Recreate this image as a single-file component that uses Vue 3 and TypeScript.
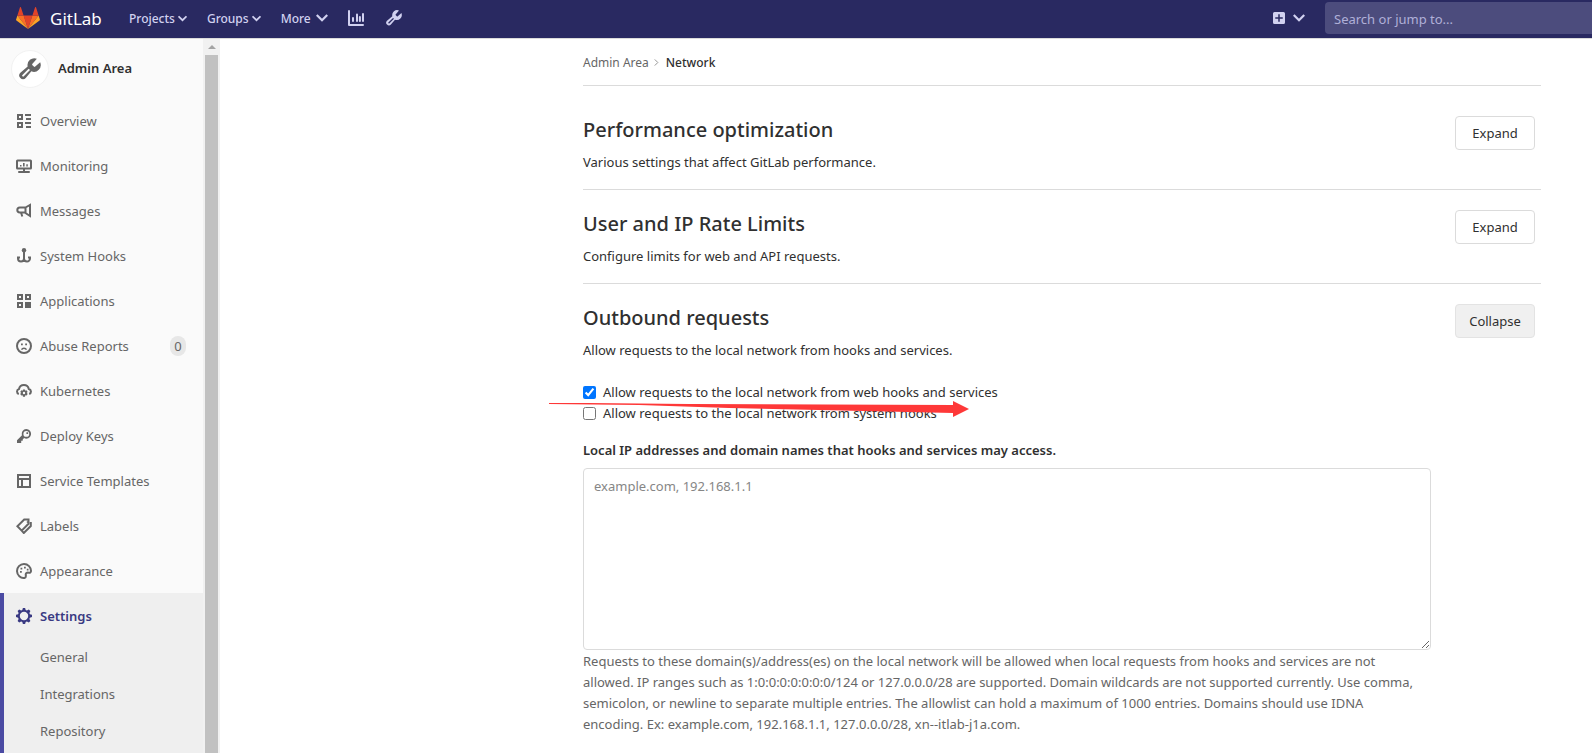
<script setup lang="ts">
import { ref } from 'vue'

interface Icon {
  fill?: string
  stroke?: string
}

interface NavItem {
  label: string
  icon: string
  badge?: number
}

const icons: Record<string, Icon> = {
  overview: {
    fill: 'M1 1h6v6H1zM3 3v2h2V3zM1 9h6v6H1zM3 11v2h2v-2zM9 1h6v2H9zM10 5h5v2h-5zM9 9h6v2H9zM10 13h5v2h-5z',
  },
  monitor: {
    fill: 'M1.500 1.500h13A1.500 1.500 0 0 1 16 3v7a1.500 1.500 0 0 1-1.500 1.500H9V13h4a1 1 0 0 1 0 2H3a1 1 0 0 1 0-2h4v-1.500H1.500A1.500 1.500 0 0 1 0 10V3a1.500 1.500 0 0 1 1.500-1.500zM2 3.500v6h12v-6zM4 7h1.500v1.500H4zM7 5h1.600v3.500H7zM10.300 6.200h1.500v2.300h-1.500z',
  },
  messages: {
    stroke: 'M9.500 4.500 14 2v11l-4.500-3zM9.500 4.500H3.800a2.200 2.200 0 0 0 0 5h5.700M5 9.500l1.300 4',
  },
  hook: {
    fill: 'M8 0a2.200 2.200 0 1 0 0 4.400A2.200 2.200 0 0 0 8 0z',
    stroke: 'M8 3v10.500M2 9v1.500a3 3 0 0 0 6 0 3 3 0 0 0 6 0V9M1 9.600h3M12 9.600h3',
  },
  applications: {
    fill: 'M1 1h6v6H1zM3 3v2h2V3zM9 1h6v6H9zM11 3v2h2V3zM1 9h6v6H1zM3 11v2h2v-2zM9 9h6v6H9z',
  },
  frown: {
    fill: 'M5 5.500h1.800v1.800H5zM9.200 5.500H11v1.800H9.200zM5 11.800C5.500 8.600 10.500 8.600 11 11.800H9.400C9 10.700 7 10.700 6.600 11.800z',
    stroke: 'M8 1a7 7 0 1 0 0 14A7 7 0 0 0 8 1z',
  },
  cloud: {
    fill: 'M7 6.500h2l.3 1.200 1.200-.5 1.200 1.700-1 .8 1 1.200-1.100 1.700-1.300-.4L9 13.700H7l-.4-1.500-1.300.4-1.100-1.700 1-1.200-1-.8 1.200-1.700 1.300.5zM8 8.800a1.200 1.200 0 1 0 0 2.400 1.200 1.200 0 0 0 0-2.400z',
    stroke: 'M2.800 11A2.600 2.600 0 0 1 3 6a5 5 0 0 1 9.800 0 2.600 2.600 0 0 1 .4 5',
  },
  key: {
    fill: 'M10.200 1a4.800 4.800 0 1 1-2.100 9.100L6.700 11.500v1.300H5.200V15H1v-2.800l5-5A4.800 4.800 0 0 1 10.200 1zM10.300 3a2.900 2.900 0 1 0 0 5.800 2.900 2.900 0 0 0 0-5.800zM10.400 4.200h1.700v1.700h-1.700z',
  },
  template: {
    fill: 'M1 1h14v14H1zM3 3v2h10V3zM3 7v6h2V7zM7 7v6h6V7z',
  },
  labels: {
    fill: 'M10.800 3.300h1.500v1.500h-1.500z',
    stroke: 'M8.200 1.500h4.300v4.300L5.700 12.600 1.400 8.300zM14.800 4v4l-7 7-2.100-2.400',
  },
  palette: {
    fill: 'M4 8h1.800v1.800H4zM4.500 4.800h1.800v1.800H4.500zM8 3.800h1.800v1.800H8zM10.800 5.800h1.700v1.700h-1.700z',
    stroke: 'M8.500 15A7 7 0 1 1 15 8.200c-.2 1.500-1.200 1.700-2.200 1.500-2-.4-3.400.7-3 2.500.2 1.200.2 2.400-1.300 2.800z',
  },
  gear: {
    fill: 'M6.900 0h2.200l.6 2 1.200.5 1.900-1 1.600 1.600-1 1.900.5 1.200 2.100.6v2.300l-2.100.7-.5 1.200 1 1.900-1.600 1.600-1.900-1-1.200.5-.6 2H6.900l-.6-2-1.200-.5-1.900 1-1.600-1.600 1-1.900L2.100 9.800 0 9.100V6.800l2.100-.6.5-1.200-1-1.900 1.600-1.600 1.900 1L6.300 2zM8 3.800a4.200 4.200 0 1 0 0 8.400 4.200 4.200 0 0 0 0-8.400z',
  },
  wrench: {
    fill: 'M9.800 4.200a.7.700 0 0 0 0 1l1 1a.7.700 0 0 0 1 0l3.600-3.100a5 5 0 0 1-6.400 6.600L4.900 14.500a2.600 2.600 0 0 1-3.900 0 2.600 2.600 0 0 1 0-3.700L6.300 6.200A5 5 0 0 1 13 .5zM7 7.900l-4.500 4.400a.7.700 0 0 0 1 1L8 8.800z',
  },
  chart: {
    fill: 'M1 0a1 1 0 0 1 1 1v13h13a1 1 0 0 1 0 2H1a1 1 0 0 1-1-1V1a1 1 0 0 1 1-1zM5 7a1 1 0 0 1 1 1v3a1 1 0 0 1-2 0V8a1 1 0 0 1 1-1zM8 4.500a1 1 0 0 1 2 0V11a1 1 0 0 1-2 0zM10.900 7a1 1 0 0 1 2 0v4a1 1 0 0 1-2 0zM14 4a1 1 0 0 1 2 0v7a1 1 0 0 1-2 0z',
  },
  plus: {
    fill: 'M2 0h12a2 2 0 0 1 2 2v12a2 2 0 0 1-2 2H2a2 2 0 0 1-2-2V2a2 2 0 0 1 2-2zM7 3v4H3v2h4v4h2V9h4V7H9V3z',
  },
  chevron: { stroke: 'M1 4l7 7 7-7' },
  angle: { stroke: 'M4 1l7 7-7 7' },
}

const menus = [
  { label: 'Projects', size: 'small' },
  { label: 'Groups', size: 'small' },
  { label: 'More', size: 'large' },
]

const navItems: NavItem[] = [
  { label: 'Overview', icon: 'overview' },
  { label: 'Monitoring', icon: 'monitor' },
  { label: 'Messages', icon: 'messages' },
  { label: 'System Hooks', icon: 'hook' },
  { label: 'Applications', icon: 'applications' },
  { label: 'Abuse Reports', icon: 'frown', badge: 0 },
  { label: 'Kubernetes', icon: 'cloud' },
  { label: 'Deploy Keys', icon: 'key' },
  { label: 'Service Templates', icon: 'template' },
  { label: 'Labels', icon: 'labels' },
  { label: 'Appearance', icon: 'palette' },
]

const settingsItems = ['General', 'Integrations', 'Repository']

const allowWebHooks = ref(true)
const allowSystemHooks = ref(false)
const allowlist = ref('')
</script>

<template>
  <div class="page">
    <header class="navbar">
      <a class="brand" href="#">
        <svg class="logo" viewBox="0 0 24 22" aria-hidden="true">
          <path fill="#e24329" d="M12 22l4.400-13.600H7.600z" />
          <path fill="#fc6d26" d="M12 22L7.600 8.400H1.400zM12 22l4.400-13.600h6.200z" />
          <path fill="#fca326" d="M1.400 8.400L.1 12.500a.9.900 0 0 0 .3 1L12 22zM22.600 8.400l1.300 4.100a.9.900 0 0 1-.3 1L12 22z" />
          <path fill="#e24329" d="M1.400 8.400h6.200L4.900.3a.5.500 0 0 0-.9 0zM22.600 8.400h-6.200L19.100.3a.5.500 0 0 1 .9 0z" />
        </svg>
        <span class="wordmark">GitLab</span>
      </a>
      <nav class="menus" aria-label="Main">
        <button v-for="menu in menus" :key="menu.label" :class="['menu', menu.size]" type="button">
          {{ menu.label }}
          <svg :class="['chevron', menu.size]" viewBox="0 0 16 16" aria-hidden="true">
            <path :d="icons.chevron.stroke" />
          </svg>
        </button>
        <a class="tool" href="#" aria-label="Analytics">
          <svg class="icon" viewBox="0 0 16 16"><path class="solid" :d="icons.chart.fill" /></svg>
        </a>
        <a class="tool" href="#" aria-label="Admin Area">
          <svg class="icon" viewBox="0 0 16 16"><path class="solid" :d="icons.wrench.fill" /></svg>
        </a>
      </nav>
      <button class="create" type="button" aria-label="New">
        <svg class="plus" viewBox="0 0 16 16"><path class="solid" :d="icons.plus.fill" /></svg>
        <svg class="chevron large" viewBox="0 0 16 16"><path :d="icons.chevron.stroke" /></svg>
      </button>
      <input class="search" type="search" placeholder="Search or jump to..." aria-label="Search or jump to" />
    </header>

    <div class="body">
      <aside class="sidebar">
        <nav class="side-nav" aria-label="Admin">
          <a class="context" href="#">
            <span class="avatar">
              <svg viewBox="0 0 16 16" aria-hidden="true"><path class="solid" :d="icons.wrench.fill" /></svg>
            </span>
            Admin Area
          </a>
          <a v-for="item in navItems" :key="item.label" class="side-link" href="#">
            <svg class="icon" viewBox="0 0 16 16" aria-hidden="true">
              <path class="solid" :d="icons[item.icon].fill" />
              <path class="line" :d="icons[item.icon].stroke" />
            </svg>
            <span>{{ item.label }}</span>
            <span v-if="item.badge !== undefined" class="badge">{{ item.badge }}</span>
          </a>
          <div class="current">
            <a class="side-link active" href="#">
              <svg class="icon" viewBox="0 0 16 16" aria-hidden="true">
                <path class="solid" :d="icons.gear.fill" />
              </svg>
              <span>Settings</span>
            </a>
            <a v-for="label in settingsItems" :key="label" class="sub-link" href="#">{{ label }}</a>
          </div>
        </nav>
        <div class="scrollbar" aria-hidden="true">
          <span class="scroll-up"></span>
          <span class="thumb"></span>
        </div>
      </aside>

      <main class="content">
        <nav class="breadcrumbs" aria-label="Breadcrumb">
          <a href="#">Admin Area</a>
          <svg class="angle" viewBox="0 0 16 16" aria-hidden="true"><path :d="icons.angle.stroke" /></svg>
          <span class="here">Network</span>
        </nav>

        <section class="settings first">
          <div class="section-head">
            <h4>Performance optimization</h4>
            <button class="btn" type="button">Expand</button>
          </div>
          <p>Various settings that affect GitLab performance.</p>
        </section>

        <section class="settings">
          <div class="section-head">
            <h4>User and IP Rate Limits</h4>
            <button class="btn" type="button">Expand</button>
          </div>
          <p>Configure limits for web and API requests.</p>
        </section>

        <section class="settings">
          <div class="section-head">
            <h4>Outbound requests</h4>
            <button class="btn pressed" type="button">Collapse</button>
          </div>
          <p>Allow requests to the local network from hooks and services.</p>

          <form class="form" @submit.prevent>
            <div class="checks">
              <div class="check">
                <input id="web-hooks" v-model="allowWebHooks" type="checkbox" />
                <label for="web-hooks">Allow requests to the local network from web hooks and services</label>
              </div>
              <div class="check">
                <input id="system-hooks" v-model="allowSystemHooks" type="checkbox" />
                <label for="system-hooks">Allow requests to the local network from system hooks</label>
              </div>
              <svg class="arrow" viewBox="0 0 420 16" aria-hidden="true">
                <path d="M0 2h40l100 1 264 1V0l16 8-16 8v-4L180 7 90 4 0 3z" />
              </svg>
            </div>
            <label class="field-label" for="allowlist">Local IP addresses and domain names that hooks and services may access.</label>
            <textarea id="allowlist" v-model="allowlist" placeholder="example.com, 192.168.1.1"></textarea>
            <div class="help">
              Requests to these domain(s)/address(es) on the local network will be allowed when local requests from hooks and services are not allowed. IP ranges such as 1:0:0:0:0:0:0:0/124 or 127.0.0.0/28 are supported. Domain wildcards are not supported currently. Use comma, semicolon, or newline to separate multiple entries. The allowlist can hold a maximum of 1000 entries. Domains should use IDNA encoding. Ex: example.com, 192.168.1.1, 127.0.0.0/28, xn--itlab-j1a.com.
            </div>
          </form>
        </section>
      </main>
    </div>
  </div>
</template>

<style>
body {
  margin: 0;
  overflow: hidden;
}
</style>

<style scoped>
.page {
  height: 100vh;
  display: flex;
  flex-direction: column;
  overflow: hidden;
  background: #fff;
  color: #303030;
  font-family: "Noto Sans", "Open Sans", sans-serif;
  font-size: 13px;
  line-height: 21px;
}

.page *,
.page *::before {
  box-sizing: border-box;
}

a {
  color: inherit;
  text-decoration: none;
}

button,
input,
textarea {
  font: inherit;
  color: inherit;
}

.solid {
  fill: currentColor;
  fill-rule: evenodd;
}

.line,
.chevron path,
.angle path {
  fill: none;
  stroke: currentColor;
  stroke-width: 2;
}

.icon {
  width: 16px;
  height: 16px;
  flex: none;
  display: block;
}

.navbar {
  flex: none;
  height: 39px;
  display: flex;
  align-items: center;
  padding: 0 0 2px 16px;
  border-bottom: 1px solid #dbdbdb;
  background: #292961;
  color: #d1d1f0;
}

.brand {
  display: flex;
  align-items: center;
  gap: 10px;
  width: 113px;
  color: #fff;
}

.logo {
  width: 24px;
  height: 22px;
}

.wordmark {
  font-size: 17px;
}

.menus {
  display: flex;
  align-items: center;
}

.menu {
  display: flex;
  align-items: center;
  gap: 3px;
  margin: 0 20px 0 0;
  padding: 0;
  border: 0;
  background: none;
  font-size: 12px;
  font-weight: 500;
}

.menu.large {
  gap: 5px;
}

.chevron.small {
  width: 9px;
  height: 9px;
}

.chevron.large {
  width: 12px;
  height: 12px;
}

.chevron path {
  stroke-width: 3;
}

.tool {
  margin-right: 22px;
}

.create {
  display: flex;
  align-items: center;
  gap: 8px;
  margin: 0 20px 0 auto;
  padding: 0;
  border: 0;
  background: none;
}

.plus {
  width: 12px;
  height: 12px;
}

.search {
  width: 267px;
  height: 32px;
  padding: 1px 9px 0;
  border: 0;
  border-radius: 4px 0 0 4px;
  outline: 0;
  background: #4c4c7d;
}

.search::placeholder {
  color: #b0b0d8;
  opacity: 1;
}

.body {
  flex: 1;
  min-height: 0;
  display: flex;
  justify-content: space-between;
}

.sidebar {
  width: 220px;
  flex: none;
  display: flex;
  background: #fafafa;
}

.side-nav {
  flex: 1;
  overflow: hidden;
  color: #666;
}

.context {
  height: 59px;
  display: flex;
  align-items: center;
  gap: 9px;
  padding-left: 11px;
  color: #303030;
  font-weight: 600;
}

.avatar {
  width: 38px;
  height: 38px;
  display: grid;
  place-items: center;
  border: 1px solid #f2f2f2;
  border-radius: 50%;
  background: #fff;
  color: #666;
}

.avatar svg {
  width: 22px;
  height: 22px;
}

.side-link {
  height: 45px;
  display: flex;
  align-items: center;
  gap: 8px;
  padding: 1px 17px 0 16px;
}

.badge {
  min-width: 16px;
  margin-left: auto;
  border-radius: 10px;
  background: #e7e7e7;
  line-height: 20px;
  text-align: center;
}

.current {
  height: 200px;
  background: #efefef;
  box-shadow: inset 4px 0 #4b4ba3;
}

.side-link.active {
  color: #393982;
  font-weight: 600;
}

.sub-link {
  display: block;
  padding: 9px 16px 7px 40px;
}

.scrollbar {
  width: 17px;
  flex: none;
  display: flex;
  flex-direction: column;
  align-items: center;
  background: #f1f1f1;
}

.scroll-up {
  height: 10px;
  margin-bottom: 6px;
  border: 4px solid transparent;
  border-top-width: 2px;
  border-bottom-color: #a3a3a3;
}

.thumb {
  flex: 1;
  width: 13px;
  background: #c1c1c1;
}

.content {
  flex: 0 1 958px;
  margin: 0 51px 0 24px;
}

.breadcrumbs {
  height: 46px;
  display: flex;
  align-items: center;
  gap: 4px;
  font-size: 12px;
  color: #666;
}

.angle {
  width: 7px;
  height: 7px;
  margin-right: 2px;
  color: #888;
}

.here {
  color: #303030;
  font-weight: 500;
}

.settings {
  height: 94px;
  padding-top: 20px;
  border-top: 1px solid #dbdbdb;
}

.settings.first {
  height: 104px;
  padding-top: 30px;
}

.settings:last-child {
  height: auto;
}

.section-head {
  height: 30px;
  display: flex;
  align-items: flex-start;
  justify-content: space-between;
  padding-right: 6px;
}

h4 {
  margin: 0;
  font-size: 20px;
  font-weight: 500;
  line-height: 28px;
}

p {
  margin: 6px 0 0;
}

.btn {
  width: 80px;
  height: 34px;
  padding: 0;
  border: 1px solid #dbdbdb;
  border-radius: 4px;
  background: #fff;
}

.btn.pressed {
  background: #f0f0f0;
  border-color: #e3e3e3;
}

.form {
  max-width: 848px;
  margin-top: 21px;
}

.checks {
  position: relative;
  margin-bottom: 16px;
}

.check {
  display: flex;
  align-items: center;
  gap: 7px;
}

.check input {
  width: 13px;
  height: 13px;
  margin: 0;
  accent-color: #0075ff;
}

.arrow {
  position: absolute;
  left: -34px;
  top: 19px;
  width: 420px;
  height: 16px;
  fill: #fe3838;
}

.field-label {
  display: block;
  margin-bottom: 7px;
  font-weight: 600;
}

textarea {
  display: block;
  width: 100%;
  height: 182px;
  padding: 7px 10px;
  border: 1px solid #dbdbdb;
  border-radius: 4px;
  outline: 0;
  background: #fff;
  resize: vertical;
}

textarea::placeholder {
  color: #868686;
  opacity: 1;
}

.help {
  padding: 1px 8px 0 0;
  color: #666;
}
</style>
